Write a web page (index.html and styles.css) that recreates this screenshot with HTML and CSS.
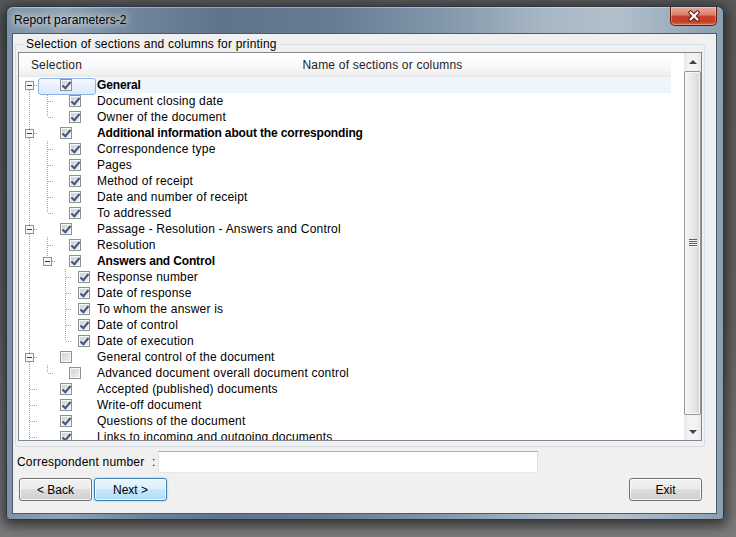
FILE: index.html
```html
<!DOCTYPE html>
<html lang="en">
<head>
    <meta charset="UTF-8">
    <meta name="viewport" content="width=device-width, initial-scale=1.0">
    <title>Report parameters-2</title>
    <link rel="stylesheet" href="styles.css">
</head>
<body>
    <div class="window">
        <div class="titlebar">
            <span class="title">Report parameters-2</span>
            <button class="close-btn" title="Close">
                <svg width="14" height="12" viewBox="0 0 14 12">
                    <path d="M3.5 2.5 L10.5 9.5 M10.5 2.5 L3.5 9.5" stroke="#5b1c12" stroke-width="4.2" stroke-linecap="round"/>
                    <path d="M3.5 2.5 L10.5 9.5 M10.5 2.5 L3.5 9.5" stroke="#ffffff" stroke-width="2.2" stroke-linecap="round"/>
                </svg>
            </button>
        </div>

        <div class="client">
            <fieldset class="group">
                <legend>Selection of sections and columns for printing</legend>

                <div class="grid">
                    <div class="grid-main">
                        <div class="grid-head">
                            <div class="col-sel">Selection</div>
                            <div class="col-name">Name of sections or columns</div>
                        </div>

                        <div class="grid-body">
                            <!-- tree guide lines and expand boxes for the Selection column -->
                            <svg class="tree-lines" width="75" height="363" viewBox="0 0 75 363">
                                <g class="dots">
                                    <path d="M10.5 13V363"/>
                                    <path d="M15 8.5H18M15 56.5H18M15 152.5H18M15 280.5H18"/>
                                    <path d="M11 312.5H18M11 328.5H18M11 344.5H18M11 360.5H18"/>
                                    <path d="M28.5 16V40M28.5 64V136M28.5 160V180M28.5 288V296"/>
                                    <path d="M29 24.5H35M29 40.5H35M29 72.5H35M29 88.5H35M29 104.5H35M29 120.5H35M29 136.5H35M29 168.5H35M29 296.5H35M33 184.5H36"/>
                                    <path d="M46.5 192V264"/>
                                    <path d="M47 200.5H53M47 216.5H53M47 232.5H53M47 248.5H53M47 264.5H53"/>
                                </g>
                                <g class="expander">
                                    <rect x="6.5" y="4.5" width="8" height="8"/>
                                    <rect x="6.5" y="52.5" width="8" height="8"/>
                                    <rect x="6.5" y="148.5" width="8" height="8"/>
                                    <rect x="24.5" y="180.5" width="8" height="8"/>
                                    <rect x="6.5" y="276.5" width="8" height="8"/>
                                </g>
                                <path class="minus" d="M8 8.5H13M8 56.5H13M8 152.5H13M26 184.5H31M8 280.5H13"/>
                            </svg>

                            <div class="row selected"><div class="sel"><span class="cb l0 on"></span></div><div class="name b">General</div></div>
                            <div class="row"><div class="sel"><span class="cb l1 on"></span></div><div class="name">Document closing date</div></div>
                            <div class="row"><div class="sel"><span class="cb l1 on"></span></div><div class="name">Owner of the document</div></div>
                            <div class="row"><div class="sel"><span class="cb l0 on"></span></div><div class="name b">Additional information about the corresponding</div></div>
                            <div class="row"><div class="sel"><span class="cb l1 on"></span></div><div class="name">Correspondence type</div></div>
                            <div class="row"><div class="sel"><span class="cb l1 on"></span></div><div class="name">Pages</div></div>
                            <div class="row"><div class="sel"><span class="cb l1 on"></span></div><div class="name">Method of receipt</div></div>
                            <div class="row"><div class="sel"><span class="cb l1 on"></span></div><div class="name">Date and number of receipt</div></div>
                            <div class="row"><div class="sel"><span class="cb l1 on"></span></div><div class="name">To addressed</div></div>
                            <div class="row"><div class="sel"><span class="cb l0 on"></span></div><div class="name">Passage - Resolution - Answers and Control</div></div>
                            <div class="row"><div class="sel"><span class="cb l1 on"></span></div><div class="name">Resolution</div></div>
                            <div class="row"><div class="sel"><span class="cb l1 on"></span></div><div class="name b">Answers and Control</div></div>
                            <div class="row"><div class="sel"><span class="cb l2 on"></span></div><div class="name">Response number</div></div>
                            <div class="row"><div class="sel"><span class="cb l2 on"></span></div><div class="name">Date of response</div></div>
                            <div class="row"><div class="sel"><span class="cb l2 on"></span></div><div class="name">To whom the answer is</div></div>
                            <div class="row"><div class="sel"><span class="cb l2 on"></span></div><div class="name">Date of control</div></div>
                            <div class="row"><div class="sel"><span class="cb l2 on"></span></div><div class="name">Date of execution</div></div>
                            <div class="row"><div class="sel"><span class="cb l0"></span></div><div class="name">General control of the document</div></div>
                            <div class="row"><div class="sel"><span class="cb l1"></span></div><div class="name">Advanced document overall document control</div></div>
                            <div class="row"><div class="sel"><span class="cb l0 on"></span></div><div class="name">Accepted (published) documents</div></div>
                            <div class="row"><div class="sel"><span class="cb l0 on"></span></div><div class="name">Write-off document</div></div>
                            <div class="row"><div class="sel"><span class="cb l0 on"></span></div><div class="name">Questions of the document</div></div>
                            <div class="row"><div class="sel"><span class="cb l0 on"></span></div><div class="name">Links to incoming and outgoing documents</div></div>
                        </div>
                    </div>

                    <div class="vscroll">
                        <div class="sb-btn"><span class="arrow-up"></span></div>
                        <div class="sb-track">
                            <div class="sb-thumb"><span class="grip"></span></div>
                        </div>
                        <div class="sb-btn"><span class="arrow-down"></span></div>
                    </div>
                </div>
            </fieldset>

            <div class="field-row">
                <label class="field-label" for="corr-number">Correspondent number</label>
                <span class="colon">:</span>
                <input type="text" id="corr-number" class="textbox">
            </div>

            <div class="button-row">
                <button class="btn">&lt; Back</button>
                <button class="btn default">Next &gt;</button>
                <button class="btn exit">Exit</button>
            </div>
        </div>
    </div>
</body>
</html>
```

FILE: styles.css
```css
* {
    box-sizing: border-box;
}

body {
    margin: 0;
    width: 736px;
    height: 537px;
    overflow: hidden;
    background: linear-gradient(#585858 0%, #626262 60%, #7a7a7a 100%);
    font-family: "Liberation Sans", Arial, sans-serif;
    font-size: 12px;
    letter-spacing: 0.2px;
    color: #000;
}

/* window frame */
.window {
    margin: 6px 0 0 6px;
    width: 718px;
    height: 514px;
    border: 1px solid #2b3845;
    border-radius: 7px 7px 4px 4px;
    background: linear-gradient(90deg, #7d92a6 0%, #90a4b6 8%, #6f859a 18%, #5f748a 30%, #677c91 45%, #8095a8 60%, #a8b7c4 75%, #b2c0cb 85%, #8b9fb1 100%);
    box-shadow: 0 3px 12px 3px rgba(0, 0, 0, 0.55), inset 0 1px 0 rgba(255, 255, 255, 0.35);
    display: flex;
    flex-direction: column;
}

.titlebar {
    height: 26px;
    display: flex;
    align-items: flex-start;
    padding-left: 7px;
}

.title {
    margin-top: 6px;
    line-height: 14px;
    letter-spacing: 0.1px;
    color: #000;
    text-shadow: 0 0 6px #fff, 0 0 10px rgba(255, 255, 255, 0.6);
}

.close-btn {
    margin-left: auto;
    margin-right: 6px;
    width: 47px;
    height: 19px;
    padding: 0;
    border: 1px solid #6b1a0e;
    border-top: none;
    border-radius: 0 0 5px 5px;
    background: linear-gradient(#e9a99c 0%, #dc7c69 45%, #c8422b 50%, #c13f27 80%, #d8694e 100%);
    box-shadow: inset 0 0 0 1px rgba(255, 255, 255, 0.3);
    display: flex;
    align-items: center;
    justify-content: center;
}

.client {
    margin: 0 0 0 5px;
    width: 705px;
    height: 481px;
    border: 1px solid #4a5b6b;
    background: #f0f0f0;
}

/* group box */
.group {
    margin: 3px 11px 0 2px;
    padding: 1px 2px 5px 2px;
    border: 1px solid #d5dfe5;
    border-radius: 3px;
    min-width: 0;
}

.group legend {
    margin-left: 6px;
    padding: 0 2px;
    line-height: 14px;
    color: #000;
}

/* list with tree column */
.grid {
    display: flex;
    height: 389px;
    border: 1px solid #828790;
    background: #fff;
}

.grid-main {
    width: 665px;
    display: flex;
    flex-direction: column;
}

.grid-head {
    display: flex;
    height: 24px;
    line-height: 24px;
    color: #1e1e1e;
}

.grid-head > div {
    text-align: center;
    background: linear-gradient(#ffffff 0%, #f8f9f9 55%, #efefef 90%, #e6e6e6 100%);
}

.col-sel {
    width: 75px;
}

.col-name {
    width: 577px;
}

.grid-body {
    position: relative;
    height: 363px;
    overflow: hidden;
}

.tree-lines {
    position: absolute;
    left: 0;
    top: 0;
}

.tree-lines .dots path {
    fill: none;
    stroke: #a3a3a3;
    stroke-width: 1;
    stroke-dasharray: 1 1;
    shape-rendering: crispEdges;
}

.tree-lines .expander rect {
    fill: #f7f7f7;
    stroke: #919191;
    stroke-width: 1;
    shape-rendering: crispEdges;
}

.tree-lines .minus {
    stroke: #3a3a3a;
    stroke-width: 1;
    shape-rendering: crispEdges;
}

.row {
    display: flex;
    height: 16px;
    line-height: 16px;
}

.sel {
    position: relative;
    width: 75px;
    display: flex;
    align-items: center;
}

.name {
    width: 577px;
    padding-left: 3px;
    white-space: nowrap;
}

.name.b {
    font-weight: bold;
    letter-spacing: -0.15px;
}

.row.selected .name {
    background: #eef5fd;
}

.row.selected .sel::before {
    content: "";
    position: absolute;
    left: 19px;
    top: 1px;
    width: 56px;
    height: 15px;
    border: 1px solid #8db2e3;
    border-radius: 3px;
    background: linear-gradient(#f4f9fe, #dbeafc);
}

/* check boxes */
.cb {
    position: relative;
    z-index: 1;
    width: 12px;
    height: 12px;
    border: 1px solid #8e8f8f;
    background: linear-gradient(135deg, #cdd1d6 0%, #eff0f1 100%);
    box-shadow: inset 0 0 0 1px #f8f8f8;
}

.cb.l0 { margin-left: 41px; }
.cb.l1 { margin-left: 50px; }
.cb.l2 { margin-left: 59px; }

.cb.on::after {
    content: "";
    position: absolute;
    left: 3px;
    top: 0;
    width: 3px;
    height: 7px;
    border: solid #43567a;
    border-width: 0 2px 2px 0;
    transform: rotate(40deg);
}

/* vertical scroll bar */
.vscroll {
    width: 17px;
    display: flex;
    flex-direction: column;
    background: linear-gradient(90deg, #e6e6e6 0%, #f3f3f3 25%, #f3f3f3 75%, #e6e6e6 100%);
}

.sb-btn {
    height: 17px;
    display: flex;
    align-items: center;
    justify-content: center;
}

.arrow-up {
    width: 0;
    height: 0;
    border-left: 4px solid transparent;
    border-right: 4px solid transparent;
    border-bottom: 4px solid #454545;
}

.arrow-down {
    width: 0;
    height: 0;
    border-left: 4px solid transparent;
    border-right: 4px solid transparent;
    border-top: 4px solid #454545;
}

.sb-track {
    flex: 1;
}

.sb-thumb {
    margin-top: 1px;
    height: 344px;
    border: 1px solid #959595;
    border-radius: 2px;
    background: linear-gradient(90deg, #f4f4f4 0%, #e9e9e9 50%, #d7d7d7 100%);
    box-shadow: inset 0 0 0 1px rgba(255, 255, 255, 0.7);
    display: flex;
    align-items: center;
    justify-content: center;
}

.grip {
    width: 8px;
    height: 8px;
    background: repeating-linear-gradient(180deg, #5e5e5e 0 1px, #f6f6f6 1px 2px);
}

/* bottom controls */
.field-row {
    display: flex;
    align-items: center;
    height: 22px;
    margin-top: 4px;
    padding-left: 4px;
}

.field-label {
    width: 135px;
}

.colon {
    width: 6px;
}

.textbox {
    width: 380px;
    height: 22px;
    margin: 0;
    border: 1px solid;
    border-color: #abadb3 #dbdfe6 #e3e9ef #e2e3ea;
    background: #fff;
    font: inherit;
    padding: 0 3px;
}

.button-row {
    display: flex;
    margin-top: 5px;
    padding-left: 6px;
    gap: 2px;
}

.btn {
    width: 73px;
    height: 23px;
    padding: 0;
    border: 1px solid #707070;
    border-radius: 3px;
    background: linear-gradient(#f2f2f2 0%, #ebebeb 49%, #dddddd 50%, #cfcfcf 100%);
    box-shadow: inset 0 0 0 1px rgba(255, 255, 255, 0.75);
    font: inherit;
    color: #000;
}

.btn.default {
    border-color: #3c7fb1;
    background: linear-gradient(#eaf6fd 0%, #d9f0fc 49%, #c6e8fb 50%, #b2dcf4 100%);
    box-shadow: inset 0 0 0 1px rgba(255, 255, 255, 0.8), 0 0 2px rgba(60, 127, 177, 0.5);
}

.btn.exit {
    margin-left: auto;
    margin-right: 14px;
}
```
